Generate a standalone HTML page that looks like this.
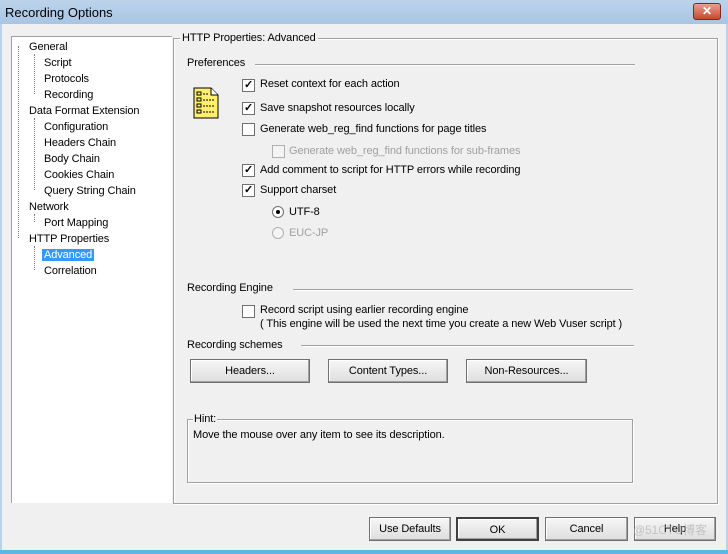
<!DOCTYPE html>
<html><head><style>
*{margin:0;padding:0;box-sizing:border-box}
body{width:728px;height:554px;background:#f0f0f0;font-family:"Liberation Sans",sans-serif;font-size:11px;letter-spacing:-0.1px;color:#000;position:relative;overflow:hidden}
.a{position:absolute;white-space:nowrap}
.title{left:0;top:0;width:728px;height:24px;background:linear-gradient(#bcd3ea,#a9c5e4);}
.close{left:693px;top:3px;width:28px;height:17px;background:linear-gradient(#e8a08f,#c9472f);border:1px solid #7a2a20;border-radius:3px;color:#fff;font-weight:bold;text-align:center;font-size:12px;line-height:15px}
.tree{left:11px;top:36px;width:161px;height:467px;background:#fff;border-left:1px solid #a0a0a0;border-top:1px solid #a0a0a0}
.grp{border:1px solid #a0a0a0;box-shadow:inset 1px 1px #fff,1px 1px #fff}
.cb{width:13px;height:13px;border:1px solid #707070;background:#fff;font-size:11px;line-height:11px;text-align:center;font-weight:bold}
.dis{color:#a0a0a0}
.btn{height:24px;border:1px solid #707070;background:linear-gradient(#f6f6f6,#dedede);box-shadow:inset -1px -1px #a0a0a0,inset 1px 1px #fff;text-align:center;line-height:22px}
.hr{background:#a0a0a0;border-bottom:1px solid #fff;height:2px}
.dot{border-left:1px dotted #808080}
.t div{height:16px}
</style></head><body>
<div class="a title"></div>
<div class="a" style="left:5px;top:5px;font-size:13px;letter-spacing:0">Recording Options</div>
<div class="a close">✕</div>
<div class="a" style="left:0;top:24px;width:2px;height:530px;background:#b9d1ea"></div>
<div class="a" style="left:726px;top:24px;width:2px;height:530px;background:#b9d1ea"></div>
<div class="a" style="left:0;top:550px;width:728px;height:4px;background:#5ab7e0"></div>

<div class="a tree"></div>
<div class="a dot" style="left:18px;top:46px;height:192px"></div>
<div class="a dot" style="left:34px;top:54px;height:40px"></div>
<div class="a dot" style="left:34px;top:118px;height:72px"></div>
<div class="a dot" style="left:34px;top:214px;height:8px"></div>
<div class="a dot" style="left:34px;top:246px;height:24px"></div>
<div class="t" style="position:absolute;left:14px;top:39px;line-height:16px">
<div style="padding-left:15px">General</div>
<div style="padding-left:30px">Script</div>
<div style="padding-left:30px">Protocols</div>
<div style="padding-left:30px">Recording</div>
<div style="padding-left:15px">Data Format Extension</div>
<div style="padding-left:30px">Configuration</div>
<div style="padding-left:30px">Headers Chain</div>
<div style="padding-left:30px">Body Chain</div>
<div style="padding-left:30px">Cookies Chain</div>
<div style="padding-left:30px">Query String Chain</div>
<div style="padding-left:15px">Network</div>
<div style="padding-left:30px">Port Mapping</div>
<div style="padding-left:15px">HTTP Properties</div>
<div style="padding-left:28px"><span style="background:#3399ff;color:#fff;padding:0 2px">Advanced</span></div>
<div style="padding-left:30px">Correlation</div>
</div>

<div class="a grp" style="left:173px;top:38px;width:545px;height:466px"></div>
<div class="a" style="left:180px;top:32px;background:#f0f0f0;padding:0 2px">HTTP Properties: Advanced</div>

<div class="a" style="left:187px;top:57px">Preferences</div>
<div class="a hr" style="left:255px;top:64px;width:380px"></div>
<svg class="a" style="left:193px;top:87px" width="26" height="32"><path d="M1 1H18L25 8V31H1Z" fill="#ffef6e" stroke="#000"/><path d="M18 1V8H25" fill="#fff" stroke="#000"/><g fill="none" stroke="#000"><rect x="4" y="5" width="4" height="3"/><rect x="4" y="11" width="4" height="3"/><rect x="4" y="17" width="4" height="3"/><rect x="4" y="23" width="4" height="3"/><path d="M10 7h6M10 13h12M10 19h12M10 25h12" stroke-dasharray="2 1"/></g></svg>

<div class="a cb" style="left:242px;top:79px">✓</div><div class="a" style="left:260px;top:78px">Reset context for each action</div>
<div class="a cb" style="left:242px;top:102px">✓</div><div class="a" style="left:260px;top:102px">Save snapshot resources locally</div>
<div class="a cb" style="left:242px;top:123px"></div><div class="a" style="left:260px;top:123px">Generate web_reg_find functions for page titles</div>
<div class="a cb" style="left:272px;top:145px;border-color:#b0b0b0;background:#f4f4f4"></div><div class="a dis" style="left:289px;top:145px">Generate web_reg_find functions for sub-frames</div>
<div class="a cb" style="left:242px;top:164px">✓</div><div class="a" style="left:260px;top:164px">Add comment to script for HTTP errors while recording</div>
<div class="a cb" style="left:242px;top:184px">✓</div><div class="a" style="left:260px;top:184px">Support charset</div>
<div class="a" style="left:272px;top:206px;width:12px;height:12px;border-radius:50%;border:1px solid #707070;background:#fff"><div style="margin:3px;width:4px;height:4px;border-radius:50%;background:#000"></div></div><div class="a" style="left:289px;top:206px">UTF-8</div>
<div class="a" style="left:272px;top:227px;width:12px;height:12px;border-radius:50%;border:1px solid #b0b0b0;background:#f4f4f4"></div><div class="a dis" style="left:289px;top:227px">EUC-JP</div>

<div class="a" style="left:187px;top:282px">Recording Engine</div>
<div class="a hr" style="left:293px;top:289px;width:340px"></div>
<div class="a cb" style="left:242px;top:305px"></div><div class="a" style="left:260px;top:304px">Record script using earlier recording engine</div>
<div class="a" style="left:260px;top:318px">( This engine will be used the next time you create a new Web Vuser script )</div>
<div class="a" style="left:187px;top:339px">Recording schemes</div>
<div class="a hr" style="left:301px;top:345px;width:333px"></div>
<div class="a btn" style="left:190px;top:359px;width:120px">Headers...</div>
<div class="a btn" style="left:328px;top:359px;width:120px">Content Types...</div>
<div class="a btn" style="left:466px;top:359px;width:121px">Non-Resources...</div>

<div class="a grp" style="left:187px;top:419px;width:446px;height:64px"></div>
<div class="a" style="left:193px;top:413px;background:#f0f0f0;padding:0 1px">Hint:</div>
<div class="a" style="left:193px;top:429px">Move the mouse over any item to see its description.</div>

<div class="a btn" style="left:369px;top:517px;width:82px">Use Defaults</div>
<div class="a btn" style="left:456px;top:517px;width:83px;border:2px solid #404040">OK</div>
<div class="a btn" style="left:545px;top:517px;width:83px">Cancel</div>
<div class="a btn" style="left:634px;top:517px;width:82px">Help</div>
<div class="a" style="left:633px;top:521px;color:rgba(170,170,170,.6);font-size:12px">@51CTO博客</div>
</body></html>
